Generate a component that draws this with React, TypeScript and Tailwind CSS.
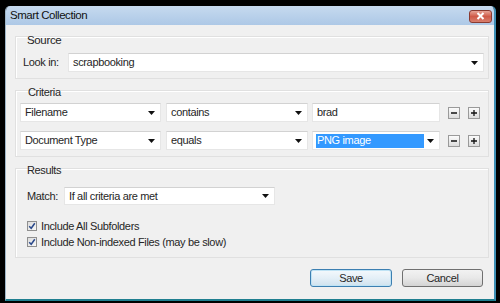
import React from "react";

const Arrow = () => (
  <svg width="7" height="4" viewBox="0 0 7 4" className="shrink-0">
    <path d="M0 0H7L3.5 4Z" fill="#111" />
  </svg>
);

const Select = ({ text, className = "" }: { text: string; className?: string }) => (
  <div className={`flex items-center bg-white border border-[#e6e6e6] border-t-[#d2d2d2] pl-[4px] pr-[5px] ${className}`}>
    <span className="flex-1 truncate">{text}</span>
    <Arrow />
  </div>
);

const SmallBtn = ({ plus }: { plus?: boolean }) => (
  <div className="w-[12px] h-[12px] border border-[#9a9a9a] bg-gradient-to-b from-[#fbfbfb] to-[#dcdcdc] flex items-center justify-center">
    <svg width="8" height="8" viewBox="0 0 8 8">
      <path d="M1 4H7" stroke="#111" strokeWidth="1.3" />
      {plus && <path d="M4 1V7" stroke="#111" strokeWidth="1.3" />}
    </svg>
  </div>
);

const Check = () => (
  <div className="w-[10px] h-[10px] border border-[#8f8f8f] bg-gradient-to-br from-[#dcdcdc] to-[#f8f8f8] flex items-center justify-center">
    <svg width="8" height="8" viewBox="0 0 8 8">
      <path d="M1.2 4.2L3.2 6.3L6.8 1.2" stroke="#2b4a8c" strokeWidth="1.5" fill="none" />
    </svg>
  </div>
);

export default function App() {
  return (
    <div
      className="w-[500px] h-[303px] bg-black pl-[5px] pt-[6px] text-[#262626] text-[11px] leading-[13px] tracking-[-0.35px]"
      style={{ fontFamily: '"Liberation Sans", Arial, sans-serif' }}
    >
      <div className="w-[491px] h-[295px] flex flex-col border-l border-l-[#9fb6c8] border-r-2 border-r-[#3d8fb5] border-b-2 border-b-[#1f7f90] rounded-t-[5px] overflow-hidden">
        {/* Title bar */}
        <div className="h-[19px] bg-gradient-to-b from-[#c6daef] to-[#adc8e6] flex items-center pl-[4px] pr-[2px]">
          <span className="flex-1 text-[11.5px] text-[#111] tracking-[-0.45px]">Smart Collection</span>
          <div className="w-[23px] h-[13px] mt-[1px] rounded-[3px] border border-[#8a3a30] bg-gradient-to-b from-[#e6a497] via-[#cf5a48] to-[#d87e6d] flex items-center justify-center">
            <svg width="9" height="8" viewBox="0 0 9 8">
              <path d="M1.5 1L7.5 7M7.5 1L1.5 7" stroke="#fff" strokeWidth="2" />
            </svg>
          </div>
        </div>
        {/* Body */}
        <div className="flex-1 bg-[#f0f0f0] flex flex-col pl-[9px] pr-[5px] pt-[11px]">
          {/* Source */}
          <div className="h-[43px] border border-[#e0e0e0] shadow-[inset_1px_1px_0_#fff] flex flex-col">
            <div className="-mt-[3px] ml-[11px] h-[12px] text-[11.5px]">Source</div>
            <div className="mt-[7px] flex items-center pl-[7px]">
              <span className="w-[45px]">Look in:</span>
              <Select text="scrapbooking" className="w-[416px] h-[19px]" />
            </div>
          </div>
          {/* Criteria */}
          <div className="mt-[11px] h-[67px] border border-[#e0e0e0] shadow-[inset_1px_1px_0_#fff] flex flex-col">
            <div className="-mt-[5px] ml-[12px] h-[12px]">Criteria</div>
            <div className="mt-[5px] flex items-center pl-[4px] h-[19px]">
              <Select text="Filename" className="w-[141px] h-[19px]" />
              <Select text="contains" className="ml-[5px] w-[142px] h-[19px]" />
              <div className="ml-[4px] w-[128px] h-[19px] bg-white border border-[#e6e6e6] border-t-[#d2d2d2] pl-[4px] flex items-center">brad</div>
              <div className="ml-[8px]"><SmallBtn /></div>
              <div className="ml-[8px]"><SmallBtn plus /></div>
            </div>
            <div className="mt-[9px] flex items-center pl-[4px] h-[19px]">
              <Select text="Document Type" className="w-[141px] h-[19px]" />
              <Select text="equals" className="ml-[5px] w-[142px] h-[19px]" />
              <div className="ml-[4px] w-[128px] h-[19px] bg-white border border-[#e6e6e6] border-t-[#d2d2d2] pl-[3px] pr-[5px] flex items-center">
                <span className="w-[108px] h-[14px] bg-[#3399ff] text-white pl-[1px] flex items-center">PNG image</span>
                <span className="flex-1" />
                <Arrow />
              </div>
              <div className="ml-[8px]"><SmallBtn /></div>
              <div className="ml-[8px]"><SmallBtn plus /></div>
            </div>
          </div>
          {/* Results */}
          <div className="mt-[11px] h-[90px] border border-[#e0e0e0] shadow-[inset_1px_1px_0_#fff] flex flex-col">
            <div className="-mt-[5px] ml-[11px] h-[12px]">Results</div>
            <div className="mt-[11px] flex items-center pl-[11px]">
              <span className="w-[37px]">Match:</span>
              <Select text="If all criteria are met" className="w-[211px] h-[18px]" />
            </div>
            <div className="mt-[13px] flex items-center pl-[11px] h-[16px] gap-[4px]">
              <Check />
              <span>Include All Subfolders</span>
            </div>
            <div className="flex items-center pl-[11px] h-[16px] gap-[4px]">
              <Check />
              <span>Include Non-indexed Files (may be slow)</span>
            </div>
          </div>
          {/* Buttons */}
          <div className="mt-[11px] flex justify-end pr-[6px] gap-[10px]">
            <div className="w-[82px] h-[18px] rounded-[3px] border border-[#3c7fb1] bg-gradient-to-b from-[#f4f9fc] via-[#e4eff7] to-[#cfe2ee] flex items-center justify-center shadow-[inset_0_0_0_1px_#bfe3f5]">Save</div>
            <div className="w-[81px] h-[18px] rounded-[3px] border border-[#707070] bg-gradient-to-b from-[#f2f2f2] via-[#e8e8e8] to-[#d4d4d4] flex items-center justify-center">Cancel</div>
          </div>
        </div>
      </div>
    </div>
  );
}
